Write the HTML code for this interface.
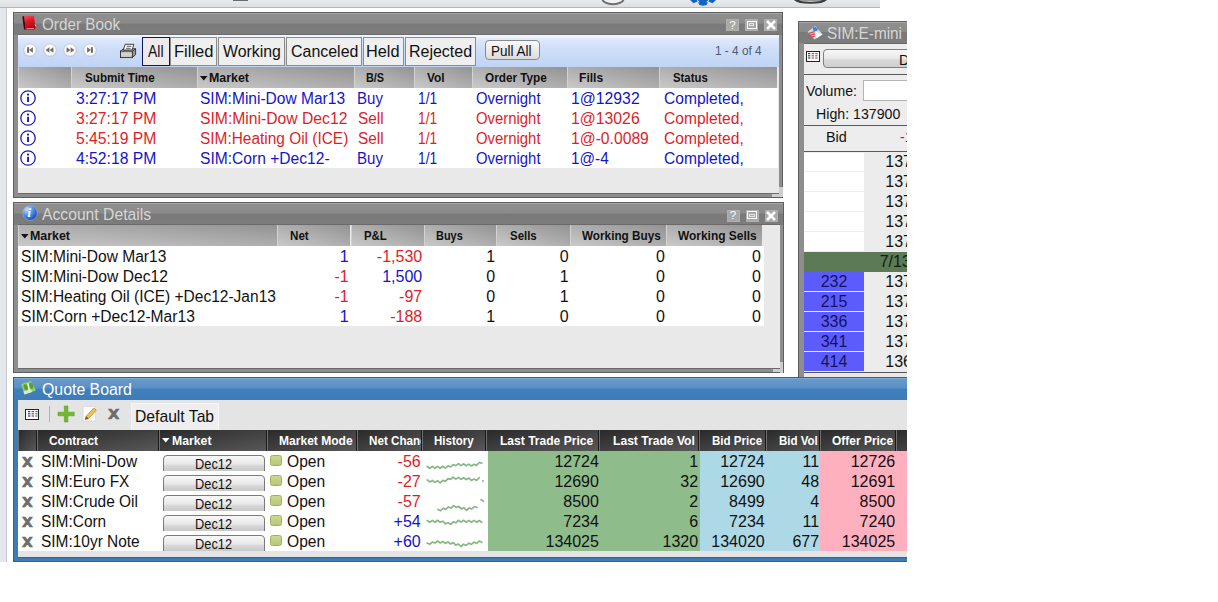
<!DOCTYPE html>
<html lang="en"><head><meta charset="utf-8"><title>Trading Workspace</title>
<style>
html,body{margin:0;padding:0;background:#fff}
body{width:1218px;height:602px;overflow:hidden;position:relative;font-family:"Liberation Sans",sans-serif}
#app{position:absolute;left:0;top:0;width:907px;height:562px;overflow:hidden;background:#fff}
.a{position:absolute;box-sizing:border-box}
.t{position:absolute;white-space:nowrap;line-height:20px;height:20px}
svg{position:absolute;overflow:visible}

</style></head>
<body>
<div id="app">
<div class="a " style="left:0px;top:0px;width:880px;height:7px;background:linear-gradient(#e9ebee,#dcdfe3)"></div>
<div class="a " style="left:0px;top:7px;width:880px;height:1px;background:#b4b6b9"></div>
<div class="a " style="left:0px;top:8px;width:6.3px;height:554px;background:#e4e7eb"></div>
<div class="a " style="left:6.3px;top:8px;width:0.9px;height:554px;background:#c4c7cb"></div>
<div class="a " style="left:233px;top:0px;width:15px;height:1.3px;background:#6a6a6a"></div>
<svg style="left:601px;top:0" width="24" height="6"><path d="M1.5 -1A10.5 5.2 0 0 0 22.5 -1z" fill="#f2f2f2" stroke="#6e6e6e" stroke-width="2"/></svg>
<svg style="left:689px;top:0" width="28" height="7"><path d="M1 0L4.5 3.2L8.5 1.6L10.5 5L14 5.8L17.5 5L19.5 1.6L23.5 3.2L27 0z" fill="#1262c8"/><path d="M8.2 0.4l2 2M19.8 0.4l-2 2" stroke="#dfe7f2" stroke-width="1.2"/></svg>
<svg style="left:794px;top:0" width="34" height="5"><path d="M1 -0.5C5 3.8 28 3.8 32 -0.5z" fill="#f4f4f4" stroke="#3c3c3c" stroke-width="2"/></svg>
<div class="a " style="left:13px;top:12px;width:770px;height:185.5px;background:#8e8e8e;border:1px solid #5e5e5e"></div>
<div class="a " style="left:14px;top:13px;width:768px;height:21.5px;background:linear-gradient(#8f8f8f 0,#8b8b8b 46%,#7a7a7a 50%,#7c7c7c 100%)"></div>
<div class="a " style="left:14px;top:13px;width:768px;height:1px;background:#a6a6a6"></div>
<div class="a " style="left:18px;top:34px;width:761px;height:160px;background:#6a6a6a"></div>
<div class="a " style="left:18px;top:35px;width:761px;height:158px;background:#e9e9e9"></div>
<svg style="left:20px;top:14px" width="18" height="18" viewBox="20 14 18 18"><defs><linearGradient id="bk" x1="0" y1="0" x2="0.3" y2="1"><stop offset="0" stop-color="#f4525e"/><stop offset=".45" stop-color="#e01828"/><stop offset="1" stop-color="#b8000e"/></linearGradient></defs><path d="M22.3 16.6L24.3 16L25.6 29.6L24 29.4z" fill="#3c060a"/><path d="M24.2 16L33.8 15.8L35.6 27.2L34.6 29.4L25.6 30z" fill="url(#bk)"/><path d="M26.5 28.9L34 28.4" stroke="#f6b4b8" stroke-width=".9"/><path d="M35 24.3l.9 2" stroke="#f6c0c4" stroke-width="1"/></svg>
<span class="t" style="top:14.5px;font-size:16px;color:#d6d6d6;left:42.0px;transform:scaleX(0.954);transform-origin:0 50%;">Order Book</span>
<div class="a " style="left:726px;top:19px;width:13px;height:12px;background:#a8a8a8;border:1px solid #b0b0b0"></div>
<div class="a " style="left:745px;top:19px;width:13px;height:12px;background:#a8a8a8;border:1px solid #b0b0b0"></div>
<div class="a " style="left:764px;top:19px;width:13px;height:12px;background:#a8a8a8;border:1px solid #b0b0b0"></div>
<span class="t" style="left:729.2px;top:14.8px;font-size:11.5px;color:#fff">?</span>
<div class="a " style="left:746.5px;top:20.6px;width:10px;height:8px;border:1.3px solid #fff"></div>
<div class="a " style="left:748.6px;top:23px;width:5.8px;height:3.2px;border:1px solid #e4e4e4"></div>
<svg style="left:765.5px;top:20.2px" width="10" height="10"><path d="M1 1L9 9M9 1L1 9" stroke="#fff" stroke-width="2.6"/></svg>
<div class="a " style="left:18px;top:35px;width:761px;height:32px;background:linear-gradient(#f6f9ff 0,#dde8fb 14%,#d0dff8 40%,#bfd4f5 100%)"></div>
<svg style="left:21.9px;top:42px" width="16" height="16" viewBox="-8 -8 16 16"><circle cx="0" cy="0.3" r="6.7" fill="#b9bcc4" opacity=".55"/><circle cx="0" cy="0" r="6" fill="#fbfbfb" stroke="#d0d2d6" stroke-width=".8"/><g fill="#6c6b66"><rect x="-2.9" y="-2.8" width="2" height="5.6"/><path d="M-0.9 0L2.9 -2.8V2.8z"/></g></svg>
<svg style="left:42.1px;top:42px" width="16" height="16" viewBox="-8 -8 16 16"><circle cx="0" cy="0.3" r="6.7" fill="#b9bcc4" opacity=".55"/><circle cx="0" cy="0" r="6" fill="#fbfbfb" stroke="#d0d2d6" stroke-width=".8"/><g fill="#6c6b66"><path d="M-4.4 0L-0.6 -2.8V2.8zM-0.4 0L3.4 -2.8V2.8z"/></g></svg>
<svg style="left:62.099999999999994px;top:42px" width="16" height="16" viewBox="-8 -8 16 16"><circle cx="0" cy="0.3" r="6.7" fill="#b9bcc4" opacity=".55"/><circle cx="0" cy="0" r="6" fill="#fbfbfb" stroke="#d0d2d6" stroke-width=".8"/><g fill="#6c6b66"><path d="M4.4 0L0.6 -2.8V2.8zM0.4 0L-3.4 -2.8V2.8z"/></g></svg>
<svg style="left:81.9px;top:42px" width="16" height="16" viewBox="-8 -8 16 16"><circle cx="0" cy="0.3" r="6.7" fill="#b9bcc4" opacity=".55"/><circle cx="0" cy="0" r="6" fill="#fbfbfb" stroke="#d0d2d6" stroke-width=".8"/><g fill="#6c6b66"><rect x="0.9" y="-2.8" width="2" height="5.6"/><path d="M0.9 0L-2.9 -2.8V2.8z"/></g></svg>
<svg style="left:119px;top:43px" width="18" height="16" viewBox="119 43 18 16"><path d="M120.5 51.2L123.5 48.8H135.5L132.3 51.2z" fill="#e8e8e8" stroke="#2a2a2a" stroke-width=".9"/><path d="M132.3 51.2L135.6 48.8V54.6L132.3 57.6z" fill="#9a9a9a" stroke="#2a2a2a" stroke-width=".9"/><rect x="120.5" y="51.2" width="11.8" height="6.4" fill="#fcfcfc" stroke="#2a2a2a" stroke-width=".9"/><path d="M121 53h11M121 56h11" stroke="#666" stroke-width=".7"/><rect x="121.4" y="53.5" width="10" height="1.9" fill="#d9d6c4"/><path d="M125.2 44.3H133.8L132.1 50H123.3z" fill="#fff" stroke="#2a2a2a" stroke-width=".9"/><path d="M126.7 46.3h4.6M126.1 48.3h4.6" stroke="#444" stroke-width=".9"/></svg>
<div class="a " style="left:142px;top:37px;width:27.5px;height:28.5px;background:#eeeaec;border:1.5px solid #14145c"></div>
<span class="t" style="top:42.0px;font-size:16px;color:#111;left:148.0px;transform:scaleX(0.871);transform-origin:0 50%;">All</span>
<div class="a " style="left:169.5px;top:37px;width:47.5px;height:28.5px;background:#efefef;border:1px solid #8c8c8c"></div>
<span class="t" style="top:42.0px;font-size:16px;color:#111;left:173.5px;transform:scaleX(1.032);transform-origin:0 50%;">Filled</span>
<div class="a " style="left:218px;top:37px;width:66.5px;height:28.5px;background:#efefef;border:1px solid #8c8c8c"></div>
<span class="t" style="top:42.0px;font-size:16px;color:#111;left:222.5px;transform:scaleX(0.991);transform-origin:0 50%;">Working</span>
<div class="a " style="left:286px;top:37px;width:75.5px;height:28.5px;background:#efefef;border:1px solid #8c8c8c"></div>
<span class="t" style="top:42.0px;font-size:16px;color:#111;left:290.5px;transform:scaleX(0.997);transform-origin:0 50%;">Canceled</span>
<div class="a " style="left:363px;top:37px;width:40.5px;height:28.5px;background:#efefef;border:1px solid #8c8c8c"></div>
<span class="t" style="top:42.0px;font-size:16px;color:#111;left:366.2px;transform:scaleX(1.019);transform-origin:0 50%;">Held</span>
<div class="a " style="left:405px;top:37px;width:70.5px;height:28.5px;background:#efefef;border:1px solid #8c8c8c"></div>
<span class="t" style="top:42.0px;font-size:16px;color:#111;left:408.5px;transform:scaleX(0.999);transform-origin:0 50%;">Rejected</span>
<div class="a " style="left:485px;top:40px;width:55px;height:20px;background:linear-gradient(#fafafa,#dcdcdc);border:1px solid #8a8a8a;border-radius:4px"></div>
<span class="t" style="top:41.0px;font-size:14px;color:#111;left:491.2px;transform:scaleX(0.964);transform-origin:0 50%;">Pull All</span>
<span class="t" style="top:41.0px;font-size:12px;color:#4c5c78;left:715.0px;transform:scaleX(0.986);transform-origin:0 50%;">1 - 4 of 4</span>
<div class="a " style="left:18px;top:66.5px;width:759px;height:0.8px;background:#c4c4c4"></div>
<div class="a " style="left:18px;top:67px;width:53px;height:21px;background:linear-gradient(to top right,#c9c9c9,#aeaeae 50%,#939393);border-left:1px solid #d2d2d2"></div>
<div class="a " style="left:71px;top:67px;width:125.5px;height:21px;background:linear-gradient(to top right,#c9c9c9,#aeaeae 50%,#939393);border-left:1px solid #d2d2d2"></div>
<div class="a " style="left:196.5px;top:67px;width:157.0px;height:21px;background:linear-gradient(to top right,#c9c9c9,#aeaeae 50%,#939393);border-left:1px solid #d2d2d2"></div>
<div class="a " style="left:353.5px;top:67px;width:60.0px;height:21px;background:linear-gradient(to top right,#c9c9c9,#aeaeae 50%,#939393);border-left:1px solid #d2d2d2"></div>
<div class="a " style="left:413.5px;top:67px;width:58.0px;height:21px;background:linear-gradient(to top right,#c9c9c9,#aeaeae 50%,#939393);border-left:1px solid #d2d2d2"></div>
<div class="a " style="left:471.5px;top:67px;width:95.0px;height:21px;background:linear-gradient(to top right,#c9c9c9,#aeaeae 50%,#939393);border-left:1px solid #d2d2d2"></div>
<div class="a " style="left:566.5px;top:67px;width:92.5px;height:21px;background:linear-gradient(to top right,#c9c9c9,#aeaeae 50%,#939393);border-left:1px solid #d2d2d2"></div>
<div class="a " style="left:659px;top:67px;width:118px;height:21px;background:linear-gradient(to top right,#c9c9c9,#aeaeae 50%,#939393);border-left:1px solid #d2d2d2"></div>
<span class="t" style="top:67.5px;font-size:12px;color:#111;font-weight:bold;left:85.0px;transform:scaleX(0.971);transform-origin:0 50%;">Submit Time</span>
<span class="t" style="top:67.5px;font-size:12px;color:#111;font-weight:bold;left:209.0px;transform:scaleX(1.034);transform-origin:0 50%;">Market</span>
<span class="t" style="top:67.5px;font-size:12px;color:#111;font-weight:bold;left:366.4px;transform:scaleX(0.905);transform-origin:0 50%;">B/S</span>
<span class="t" style="top:67.5px;font-size:12px;color:#111;font-weight:bold;left:426.7px;transform:scaleX(0.992);transform-origin:0 50%;">Vol</span>
<span class="t" style="top:67.5px;font-size:12px;color:#111;font-weight:bold;left:484.5px;transform:scaleX(0.979);transform-origin:0 50%;">Order Type</span>
<span class="t" style="top:67.5px;font-size:12px;color:#111;font-weight:bold;left:578.5px;transform:scaleX(1.007);transform-origin:0 50%;">Fills</span>
<span class="t" style="top:67.5px;font-size:12px;color:#111;font-weight:bold;left:673.0px;transform:scaleX(0.946);transform-origin:0 50%;">Status</span>
<svg style="left:200.3px;top:75.5px" width="8" height="5"><path d="M0 0h7.6L3.8 4.6z" fill="#111"/></svg>
<div class="a " style="left:18px;top:88px;width:760px;height:80px;background:#fff"></div>
<svg style="left:20px;top:90px" width="16" height="16"><circle cx="8" cy="8" r="7.2" fill="#fff" stroke="#1c1cb4" stroke-width="1.3"/><rect x="7.1" y="6.8" width="1.9" height="5.2" fill="#1c1cb4"/><circle cx="8" cy="4.6" r="1.1" fill="#1c1cb4"/></svg>
<span class="t" style="top:89.0px;font-size:16px;color:#1414c8;left:75.5px;transform:scaleX(0.982);transform-origin:0 50%;">3:27:17 PM</span>
<span class="t" style="top:89.0px;font-size:16px;color:#1414c8;left:200.3px;transform:scaleX(0.971);transform-origin:0 50%;">SIM:Mini-Dow Mar13</span>
<span class="t" style="top:89.0px;font-size:16px;color:#1414c8;left:356.8px;transform:scaleX(0.941);transform-origin:0 50%;">Buy</span>
<span class="t" style="top:89.0px;font-size:16px;color:#1414c8;left:417.7px;transform:scaleX(0.857);transform-origin:0 50%;">1/1</span>
<span class="t" style="top:89.0px;font-size:16px;color:#1414c8;left:475.8px;transform:scaleX(0.930);transform-origin:0 50%;">Overnight</span>
<span class="t" style="top:89.0px;font-size:16px;color:#1414c8;left:570.5px;transform:scaleX(0.986);transform-origin:0 50%;">1@12932</span>
<span class="t" style="top:89.0px;font-size:16px;color:#1414c8;left:664.1px;transform:scaleX(0.975);transform-origin:0 50%;">Completed,</span>
<svg style="left:20px;top:110px" width="16" height="16"><circle cx="8" cy="8" r="7.2" fill="#fff" stroke="#1c1cb4" stroke-width="1.3"/><rect x="7.1" y="6.8" width="1.9" height="5.2" fill="#1c1cb4"/><circle cx="8" cy="4.6" r="1.1" fill="#1c1cb4"/></svg>
<span class="t" style="top:109.0px;font-size:16px;color:#dc1e28;left:75.5px;transform:scaleX(0.982);transform-origin:0 50%;">3:27:17 PM</span>
<span class="t" style="top:109.0px;font-size:16px;color:#dc1e28;left:200.3px;transform:scaleX(0.981);transform-origin:0 50%;">SIM:Mini-Dow Dec12</span>
<span class="t" style="top:109.0px;font-size:16px;color:#dc1e28;left:357.7px;transform:scaleX(0.957);transform-origin:0 50%;">Sell</span>
<span class="t" style="top:109.0px;font-size:16px;color:#dc1e28;left:417.7px;transform:scaleX(0.857);transform-origin:0 50%;">1/1</span>
<span class="t" style="top:109.0px;font-size:16px;color:#dc1e28;left:475.8px;transform:scaleX(0.930);transform-origin:0 50%;">Overnight</span>
<span class="t" style="top:109.0px;font-size:16px;color:#dc1e28;left:570.5px;transform:scaleX(0.986);transform-origin:0 50%;">1@13026</span>
<span class="t" style="top:109.0px;font-size:16px;color:#dc1e28;left:664.1px;transform:scaleX(0.975);transform-origin:0 50%;">Completed,</span>
<svg style="left:20px;top:130px" width="16" height="16"><circle cx="8" cy="8" r="7.2" fill="#fff" stroke="#1c1cb4" stroke-width="1.3"/><rect x="7.1" y="6.8" width="1.9" height="5.2" fill="#1c1cb4"/><circle cx="8" cy="4.6" r="1.1" fill="#1c1cb4"/></svg>
<span class="t" style="top:129.0px;font-size:16px;color:#dc1e28;left:75.5px;transform:scaleX(0.982);transform-origin:0 50%;">5:45:19 PM</span>
<span class="t" style="top:129.0px;font-size:16px;color:#dc1e28;left:200.3px;transform:scaleX(0.964);transform-origin:0 50%;">SIM:Heating Oil (ICE)</span>
<span class="t" style="top:129.0px;font-size:16px;color:#dc1e28;left:357.7px;transform:scaleX(0.957);transform-origin:0 50%;">Sell</span>
<span class="t" style="top:129.0px;font-size:16px;color:#dc1e28;left:417.7px;transform:scaleX(0.857);transform-origin:0 50%;">1/1</span>
<span class="t" style="top:129.0px;font-size:16px;color:#dc1e28;left:475.8px;transform:scaleX(0.930);transform-origin:0 50%;">Overnight</span>
<span class="t" style="top:129.0px;font-size:16px;color:#dc1e28;left:570.5px;transform:scaleX(0.980);transform-origin:0 50%;">1@-0.0089</span>
<span class="t" style="top:129.0px;font-size:16px;color:#dc1e28;left:664.1px;transform:scaleX(0.975);transform-origin:0 50%;">Completed,</span>
<svg style="left:20px;top:150px" width="16" height="16"><circle cx="8" cy="8" r="7.2" fill="#fff" stroke="#1c1cb4" stroke-width="1.3"/><rect x="7.1" y="6.8" width="1.9" height="5.2" fill="#1c1cb4"/><circle cx="8" cy="4.6" r="1.1" fill="#1c1cb4"/></svg>
<span class="t" style="top:149.0px;font-size:16px;color:#1414c8;left:75.5px;transform:scaleX(0.982);transform-origin:0 50%;">4:52:18 PM</span>
<span class="t" style="top:149.0px;font-size:16px;color:#1414c8;left:200.3px;transform:scaleX(0.975);transform-origin:0 50%;">SIM:Corn +Dec12-</span>
<span class="t" style="top:149.0px;font-size:16px;color:#1414c8;left:356.8px;transform:scaleX(0.941);transform-origin:0 50%;">Buy</span>
<span class="t" style="top:149.0px;font-size:16px;color:#1414c8;left:417.7px;transform:scaleX(0.857);transform-origin:0 50%;">1/1</span>
<span class="t" style="top:149.0px;font-size:16px;color:#1414c8;left:475.8px;transform:scaleX(0.930);transform-origin:0 50%;">Overnight</span>
<span class="t" style="top:149.0px;font-size:16px;color:#1414c8;left:570.5px;transform:scaleX(0.957);transform-origin:0 50%;">1@-4</span>
<span class="t" style="top:149.0px;font-size:16px;color:#1414c8;left:664.1px;transform:scaleX(0.975);transform-origin:0 50%;">Completed,</span>
<div class="a " style="left:777.5px;top:67px;width:1.5px;height:126px;background:#e6e6e6"></div>
<div class="a " style="left:779.3px;top:187px;width:3.4px;height:10.3px;background:#cdcdcd"></div>
<div class="a " style="left:772px;top:193.6px;width:10.7px;height:3.7px;background:#cdcdcd"></div>
<div class="a " style="left:13px;top:202px;width:770.5px;height:171px;background:#8e8e8e;border:1px solid #5e5e5e"></div>
<div class="a " style="left:14px;top:203px;width:768.5px;height:21.5px;background:linear-gradient(#8f8f8f 0,#8b8b8b 46%,#7a7a7a 50%,#7c7c7c 100%)"></div>
<div class="a " style="left:14px;top:203px;width:768.5px;height:1px;background:#a6a6a6"></div>
<div class="a " style="left:18px;top:224px;width:761.5px;height:145px;background:#6a6a6a"></div>
<div class="a " style="left:18px;top:225px;width:761.5px;height:143px;background:#e9e9e9"></div>
<svg style="left:22px;top:205px" width="16" height="16"><defs><radialGradient id="ig" cx=".3" cy=".25" r=".95"><stop offset="0" stop-color="#c4dcf8"/><stop offset=".4" stop-color="#5a96e6"/><stop offset=".7" stop-color="#2462d4"/><stop offset="1" stop-color="#0c2478"/></radialGradient></defs><circle cx="8" cy="8" r="7.3" fill="url(#ig)" stroke="#9fb4d8" stroke-width=".6"/><text x="5.6" y="12.2" font-family="Liberation Serif, serif" font-style="italic" font-weight="bold" font-size="12.5" fill="#fff">i</text></svg>
<span class="t" style="top:204.5px;font-size:16px;color:#d6d6d6;left:42.0px;transform:scaleX(0.981);transform-origin:0 50%;">Account Details</span>
<div class="a " style="left:726.5px;top:209.5px;width:13px;height:12px;background:#a8a8a8;border:1px solid #b0b0b0"></div>
<div class="a " style="left:745.5px;top:209.5px;width:13px;height:12px;background:#a8a8a8;border:1px solid #b0b0b0"></div>
<div class="a " style="left:764.5px;top:209.5px;width:13px;height:12px;background:#a8a8a8;border:1px solid #b0b0b0"></div>
<span class="t" style="left:729.7px;top:205.3px;font-size:11.5px;color:#fff">?</span>
<div class="a " style="left:747.0px;top:211.1px;width:10px;height:8px;border:1.3px solid #fff"></div>
<div class="a " style="left:749.1px;top:213.5px;width:5.8px;height:3.2px;border:1px solid #e4e4e4"></div>
<svg style="left:766.0px;top:210.7px" width="10" height="10"><path d="M1 1L9 9M9 1L1 9" stroke="#fff" stroke-width="2.6"/></svg>
<div class="a " style="left:18px;top:225px;width:259.3px;height:21px;background:linear-gradient(to top right,#c9c9c9,#aeaeae 50%,#939393);border-left:1px solid #d2d2d2"></div>
<div class="a " style="left:277.3px;top:225px;width:73.19999999999999px;height:21px;background:linear-gradient(to top right,#c9c9c9,#aeaeae 50%,#939393);border-left:1px solid #d2d2d2"></div>
<div class="a " style="left:350.5px;top:225px;width:73.30000000000001px;height:21px;background:linear-gradient(to top right,#c9c9c9,#aeaeae 50%,#939393);border-left:1px solid #d2d2d2"></div>
<div class="a " style="left:423.8px;top:225px;width:72.59999999999997px;height:21px;background:linear-gradient(to top right,#c9c9c9,#aeaeae 50%,#939393);border-left:1px solid #d2d2d2"></div>
<div class="a " style="left:496.4px;top:225px;width:73.39999999999998px;height:21px;background:linear-gradient(to top right,#c9c9c9,#aeaeae 50%,#939393);border-left:1px solid #d2d2d2"></div>
<div class="a " style="left:569.8px;top:225px;width:96.40000000000009px;height:21px;background:linear-gradient(to top right,#c9c9c9,#aeaeae 50%,#939393);border-left:1px solid #d2d2d2"></div>
<div class="a " style="left:666.2px;top:225px;width:96.29999999999995px;height:21px;background:linear-gradient(to top right,#c9c9c9,#aeaeae 50%,#939393);border-left:1px solid #d2d2d2"></div>
<svg style="left:21.2px;top:233.5px" width="8" height="5"><path d="M0 0h7.6L3.8 4.6z" fill="#111"/></svg>
<span class="t" style="top:225.5px;font-size:12px;color:#111;font-weight:bold;left:30.0px;transform:scaleX(1.034);transform-origin:0 50%;">Market</span>
<span class="t" style="top:225.5px;font-size:12px;color:#111;font-weight:bold;left:290.3px;transform:scaleX(0.967);transform-origin:0 50%;">Net</span>
<span class="t" style="top:225.5px;font-size:12px;color:#111;font-weight:bold;left:363.5px;transform:scaleX(0.951);transform-origin:0 50%;">P&amp;L</span>
<span class="t" style="top:225.5px;font-size:12px;color:#111;font-weight:bold;left:436.0px;transform:scaleX(0.910);transform-origin:0 50%;">Buys</span>
<span class="t" style="top:225.5px;font-size:12px;color:#111;font-weight:bold;left:510.0px;transform:scaleX(0.953);transform-origin:0 50%;">Sells</span>
<span class="t" style="top:225.5px;font-size:12px;color:#111;font-weight:bold;left:582.0px;transform:scaleX(0.978);transform-origin:0 50%;">Working Buys</span>
<span class="t" style="top:225.5px;font-size:12px;color:#111;font-weight:bold;left:678.0px;transform:scaleX(0.994);transform-origin:0 50%;">Working Sells</span>
<div class="a " style="left:18px;top:246px;width:745.5px;height:80px;background:#fff"></div>
<span class="t" style="top:247.0px;font-size:16px;color:#111;left:21.4px;transform:scaleX(0.973);transform-origin:0 50%;">SIM:Mini-Dow Mar13</span>
<span class="t" style="top:247.0px;font-size:16px;color:#1414c8;right:558.3px;transform:scaleX(1.000);transform-origin:100% 50%;">1</span>
<span class="t" style="top:247.0px;font-size:16px;color:#dc1e28;right:484.8px;transform:scaleX(1.000);transform-origin:100% 50%;">-1,530</span>
<span class="t" style="top:247.0px;font-size:16px;color:#111;right:411.9px;transform:scaleX(1.000);transform-origin:100% 50%;">1</span>
<span class="t" style="top:247.0px;font-size:16px;color:#111;right:338.3px;transform:scaleX(1.000);transform-origin:100% 50%;">0</span>
<span class="t" style="top:247.0px;font-size:16px;color:#111;right:242.1px;transform:scaleX(1.000);transform-origin:100% 50%;">0</span>
<span class="t" style="top:247.0px;font-size:16px;color:#111;right:146.1px;transform:scaleX(1.000);transform-origin:100% 50%;">0</span>
<span class="t" style="top:267.0px;font-size:16px;color:#111;left:21.4px;transform:scaleX(0.978);transform-origin:0 50%;">SIM:Mini-Dow Dec12</span>
<span class="t" style="top:267.0px;font-size:16px;color:#dc1e28;right:558.3px;transform:scaleX(1.000);transform-origin:100% 50%;">-1</span>
<span class="t" style="top:267.0px;font-size:16px;color:#1414c8;right:484.8px;transform:scaleX(1.000);transform-origin:100% 50%;">1,500</span>
<span class="t" style="top:267.0px;font-size:16px;color:#111;right:411.9px;transform:scaleX(1.000);transform-origin:100% 50%;">0</span>
<span class="t" style="top:267.0px;font-size:16px;color:#111;right:338.3px;transform:scaleX(1.000);transform-origin:100% 50%;">1</span>
<span class="t" style="top:267.0px;font-size:16px;color:#111;right:242.1px;transform:scaleX(1.000);transform-origin:100% 50%;">0</span>
<span class="t" style="top:267.0px;font-size:16px;color:#111;right:146.1px;transform:scaleX(1.000);transform-origin:100% 50%;">0</span>
<span class="t" style="top:287.0px;font-size:16px;color:#111;left:21.4px;transform:scaleX(0.970);transform-origin:0 50%;">SIM:Heating Oil (ICE) +Dec12-Jan13</span>
<span class="t" style="top:287.0px;font-size:16px;color:#dc1e28;right:558.3px;transform:scaleX(1.000);transform-origin:100% 50%;">-1</span>
<span class="t" style="top:287.0px;font-size:16px;color:#dc1e28;right:484.8px;transform:scaleX(1.000);transform-origin:100% 50%;">-97</span>
<span class="t" style="top:287.0px;font-size:16px;color:#111;right:411.9px;transform:scaleX(1.000);transform-origin:100% 50%;">0</span>
<span class="t" style="top:287.0px;font-size:16px;color:#111;right:338.3px;transform:scaleX(1.000);transform-origin:100% 50%;">1</span>
<span class="t" style="top:287.0px;font-size:16px;color:#111;right:242.1px;transform:scaleX(1.000);transform-origin:100% 50%;">0</span>
<span class="t" style="top:287.0px;font-size:16px;color:#111;right:146.1px;transform:scaleX(1.000);transform-origin:100% 50%;">0</span>
<span class="t" style="top:307.0px;font-size:16px;color:#111;left:21.4px;transform:scaleX(0.975);transform-origin:0 50%;">SIM:Corn +Dec12-Mar13</span>
<span class="t" style="top:307.0px;font-size:16px;color:#1414c8;right:558.3px;transform:scaleX(1.000);transform-origin:100% 50%;">1</span>
<span class="t" style="top:307.0px;font-size:16px;color:#dc1e28;right:484.8px;transform:scaleX(1.000);transform-origin:100% 50%;">-188</span>
<span class="t" style="top:307.0px;font-size:16px;color:#111;right:411.9px;transform:scaleX(1.000);transform-origin:100% 50%;">1</span>
<span class="t" style="top:307.0px;font-size:16px;color:#111;right:338.3px;transform:scaleX(1.000);transform-origin:100% 50%;">0</span>
<span class="t" style="top:307.0px;font-size:16px;color:#111;right:242.1px;transform:scaleX(1.000);transform-origin:100% 50%;">0</span>
<span class="t" style="top:307.0px;font-size:16px;color:#111;right:146.1px;transform:scaleX(1.000);transform-origin:100% 50%;">0</span>
<div class="a " style="left:780px;top:362px;width:3.2px;height:10.5px;background:#cdcdcd"></div>
<div class="a " style="left:772.5px;top:368.6px;width:10.7px;height:3.6px;background:#cdcdcd"></div>
<div class="a " style="left:798px;top:21px;width:120px;height:360px;background:#8e8e8e;border:1px solid #5e5e5e"></div>
<div class="a " style="left:799px;top:22px;width:118px;height:21px;background:linear-gradient(#8f8f8f 0,#8b8b8b 46%,#7a7a7a 50%,#7c7c7c 100%)"></div>
<div class="a " style="left:799px;top:22px;width:118px;height:1px;background:#a6a6a6"></div>
<div class="a " style="left:803.5px;top:43px;width:110px;height:330px;background:#6a6a6a"></div>
<div class="a " style="left:803.5px;top:44px;width:110px;height:328.5px;background:#ededed"></div>
<span class="t" style="top:23.5px;font-size:16px;color:#d6d6d6;left:826.5px;transform:scaleX(0.959);transform-origin:0 50%;">SIM:E-mini</span>
<svg style="left:806px;top:24px" width="18" height="17"><path d="M1.5 8L9 2L16.5 10L8.5 15.5Z" fill="#e4e8ee" opacity=".85"/><path d="M9.5 7.5L16.5 10.5L10.5 14.5Z" fill="#f6f6f8"/><circle cx="9.3" cy="4.8" r="2.5" fill="#4a84c4"/><path d="M8 3.2a2 2 0 0 1 3 .6" stroke="#a8c8ec" stroke-width="1" fill="none"/><path d="M2.6 9.3l6-1.6M3 11.4l6-1.6M3.6 13.5l5-1.4" stroke="#dc4650" stroke-width="1.3"/></svg>
<div class="a " style="left:806.3px;top:51.2px;width:14px;height:10.4px;background:#fff;border:1px solid #222;border-bottom-width:1.6px;border-right-width:1.4px"></div>
<svg style="left:808.4px;top:53.2px" width="11" height="6"><rect x="0.0" y="0.0" width="2.4" height="1.2" fill="#2a5a4e"/><rect x="3.6" y="0.0" width="2.4" height="1.2" fill="#c8406e"/><rect x="7.2" y="0.0" width="2.4" height="1.2" fill="#3a8a5a"/><rect x="0.0" y="2.2" width="2.4" height="1.2" fill="#2a5a4e"/><rect x="3.6" y="2.2" width="2.4" height="1.2" fill="#c8406e"/><rect x="7.2" y="2.2" width="2.4" height="1.2" fill="#3a8a5a"/><rect x="0.0" y="4.4" width="2.4" height="1.2" fill="#2a5a4e"/><rect x="3.6" y="4.4" width="2.4" height="1.2" fill="#c8406e"/><rect x="7.2" y="4.4" width="2.4" height="1.2" fill="#3a8a5a"/></svg>
<div class="a " style="left:822.5px;top:49px;width:120px;height:19.3px;background:linear-gradient(#f8f8f8,#e8e8e8 52%,#d8d8d8 58%,#cfcfcf);border:1px solid #808080;border-radius:4px"></div>
<span class="t" style="top:50.0px;font-size:15px;color:#111;left:898.5px;transform:scaleX(0.950);transform-origin:0 50%;">D</span>
<div class="a " style="left:803.5px;top:74px;width:110px;height:1px;background:#5a5a5a"></div>
<span class="t" style="top:80.5px;font-size:14px;color:#111;left:806.0px;transform:scaleX(1.006);transform-origin:0 50%;">Volume:</span>
<div class="a " style="left:863px;top:79.5px;width:60px;height:21px;background:#fff;border:1px solid #b4b4b4"></div>
<span class="t" style="top:103.5px;font-size:14px;color:#111;left:815.5px;transform:scaleX(1.012);transform-origin:0 50%;">High: 137900</span>
<div class="a " style="left:803.5px;top:125.2px;width:110px;height:1px;background:#5a5a5a"></div>
<span class="t" style="top:126.5px;font-size:14px;color:#111;left:826.4px;transform:scaleX(1.030);transform-origin:0 50%;">Bid</span>
<span class="t" style="top:126.5px;font-size:14px;color:#c8141e;left:900.0px;transform:scaleX(1.000);transform-origin:0 50%;">-1</span>
<div class="a " style="left:803.5px;top:151px;width:110px;height:1px;background:#5a5a5a"></div>
<div class="a " style="left:803.5px;top:152.5px;width:60.5px;height:220px;background:#fff"></div>
<div class="a " style="left:864px;top:152.5px;width:50px;height:220px;background:#ececec"></div>
<div class="a " style="left:803.5px;top:171.0px;width:60.5px;height:1px;background:#eeeeee"></div>
<span class="t" style="top:151.8px;font-size:16px;color:#111;left:885.3px;transform:scaleX(1.000);transform-origin:0 50%;">137</span>
<div class="a " style="left:803.5px;top:191.0px;width:60.5px;height:1px;background:#eeeeee"></div>
<span class="t" style="top:171.8px;font-size:16px;color:#111;left:885.3px;transform:scaleX(1.000);transform-origin:0 50%;">137</span>
<div class="a " style="left:803.5px;top:211.0px;width:60.5px;height:1px;background:#eeeeee"></div>
<span class="t" style="top:191.8px;font-size:16px;color:#111;left:885.3px;transform:scaleX(1.000);transform-origin:0 50%;">137</span>
<div class="a " style="left:803.5px;top:231.0px;width:60.5px;height:1px;background:#eeeeee"></div>
<span class="t" style="top:211.8px;font-size:16px;color:#111;left:885.3px;transform:scaleX(1.000);transform-origin:0 50%;">137</span>
<div class="a " style="left:803.5px;top:251.0px;width:60.5px;height:1px;background:#eeeeee"></div>
<span class="t" style="top:231.8px;font-size:16px;color:#111;left:885.3px;transform:scaleX(1.000);transform-origin:0 50%;">137</span>
<div class="a " style="left:803.5px;top:251.5px;width:110px;height:20px;background:#5c7a56"></div>
<span class="t" style="top:251.8px;font-size:16px;color:#10200c;left:879.7px;transform:scaleX(1.000);transform-origin:0 50%;">7/13</span>
<div class="a " style="left:803.5px;top:291.0px;width:60.5px;height:1px;background:#eeeeee"></div>
<div class="a " style="left:803.5px;top:272.0px;width:60.5px;height:19px;background:#5c5cfc"></div>
<span class="t" style="top:271.8px;font-size:16px;color:#14145c;left:820.7px;transform:scaleX(1.000);transform-origin:50% 50%;">232</span>
<span class="t" style="top:271.8px;font-size:16px;color:#111;left:885.3px;transform:scaleX(1.000);transform-origin:0 50%;">137</span>
<div class="a " style="left:803.5px;top:311.0px;width:60.5px;height:1px;background:#eeeeee"></div>
<div class="a " style="left:803.5px;top:292.0px;width:60.5px;height:19px;background:#5c5cfc"></div>
<span class="t" style="top:291.8px;font-size:16px;color:#14145c;left:820.7px;transform:scaleX(1.000);transform-origin:50% 50%;">215</span>
<span class="t" style="top:291.8px;font-size:16px;color:#111;left:885.3px;transform:scaleX(1.000);transform-origin:0 50%;">137</span>
<div class="a " style="left:803.5px;top:331.0px;width:60.5px;height:1px;background:#eeeeee"></div>
<div class="a " style="left:803.5px;top:312.0px;width:60.5px;height:19px;background:#5c5cfc"></div>
<span class="t" style="top:311.8px;font-size:16px;color:#14145c;left:820.7px;transform:scaleX(1.000);transform-origin:50% 50%;">336</span>
<span class="t" style="top:311.8px;font-size:16px;color:#111;left:885.3px;transform:scaleX(1.000);transform-origin:0 50%;">137</span>
<div class="a " style="left:803.5px;top:351.0px;width:60.5px;height:1px;background:#eeeeee"></div>
<div class="a " style="left:803.5px;top:332.0px;width:60.5px;height:19px;background:#5c5cfc"></div>
<span class="t" style="top:331.8px;font-size:16px;color:#14145c;left:820.7px;transform:scaleX(1.000);transform-origin:50% 50%;">341</span>
<span class="t" style="top:331.8px;font-size:16px;color:#111;left:885.3px;transform:scaleX(1.000);transform-origin:0 50%;">137</span>
<div class="a " style="left:803.5px;top:371.0px;width:60.5px;height:1px;background:#eeeeee"></div>
<div class="a " style="left:803.5px;top:352.0px;width:60.5px;height:19px;background:#5c5cfc"></div>
<span class="t" style="top:351.8px;font-size:16px;color:#14145c;left:820.7px;transform:scaleX(1.000);transform-origin:50% 50%;">414</span>
<span class="t" style="top:351.8px;font-size:16px;color:#111;left:885.3px;transform:scaleX(1.000);transform-origin:0 50%;">136</span>
<div class="a " style="left:803.5px;top:372px;width:110px;height:1px;background:#555"></div>
<div class="a " style="left:803.5px;top:373px;width:110px;height:4px;background:#e8e8e8"></div>
<div class="a " style="left:13px;top:377px;width:910px;height:185px;background:#3f7cb6;border:1px solid #2f6398"></div>
<div class="a " style="left:14px;top:378px;width:908px;height:22px;background:linear-gradient(#6a9acb 0,#5b8fc3 46%,#3f7fbc 50%,#3d7cb8 100%)"></div>
<div class="a " style="left:14px;top:378px;width:908px;height:1px;background:#7eaad6"></div>
<div class="a " style="left:17.5px;top:399.5px;width:900px;height:158px;background:#2f6398"></div>
<div class="a " style="left:18px;top:400px;width:900px;height:157px;background:#e4e4e4"></div>
<svg style="left:20px;top:380px" width="18" height="16"><path d="M1.2 4L11 1L16 10.5L4.5 14.5Z" fill="#90d06c"/><path d="M3.4 11.4L4.6 14.6L12.2 12L11 9.2Z" fill="#d8ead0"/><ellipse cx="5.8" cy="7.2" rx="2.1" ry="3.1" transform="rotate(-18 5.8 7.2)" fill="#5c9c36"/><ellipse cx="11" cy="5.9" rx="2.1" ry="3.1" transform="rotate(-18 11 5.9)" fill="#5c9c36"/><path d="M8 3.4L9.2 10" stroke="#dff2d6" stroke-width="1.7"/></svg>
<span class="t" style="top:379.5px;font-size:16px;color:#fff;left:41.5px;transform:scaleX(0.991);transform-origin:0 50%;">Quote Board</span>
<div class="a " style="left:25.2px;top:409.2px;width:14px;height:10.8px;background:#fff;border:1px solid #222;border-bottom-width:1.6px;border-right-width:1.4px"></div>
<svg style="left:27.6px;top:411.2px" width="11" height="6"><rect x="0.0" y="0.0" width="2.4" height="1.2" fill="#2a3a8c"/><rect x="3.6" y="0.0" width="2.4" height="1.2" fill="#a23a5c"/><rect x="7.2" y="0.0" width="2.4" height="1.2" fill="#3a8a62"/><rect x="0.0" y="2.2" width="2.4" height="1.2" fill="#2a3a8c"/><rect x="3.6" y="2.2" width="2.4" height="1.2" fill="#a23a5c"/><rect x="7.2" y="2.2" width="2.4" height="1.2" fill="#3a8a62"/><rect x="0.0" y="4.4" width="2.4" height="1.2" fill="#2a3a8c"/><rect x="3.6" y="4.4" width="2.4" height="1.2" fill="#a23a5c"/><rect x="7.2" y="4.4" width="2.4" height="1.2" fill="#3a8a62"/></svg>
<div class="a " style="left:49px;top:406px;width:1px;height:16px;background:#b0b0b0"></div>
<svg style="left:58px;top:406px" width="17" height="16"><path d="M6.3 0h3.6v6.2h6.3v3.6h-6.3v6.2h-3.6v-6.2h-6.3v-3.6h6.3z" fill="#72b82e" stroke="#5c9e22" stroke-width=".6"/></svg>
<svg style="left:82px;top:405px" width="16" height="17"><rect x="1" y="1.5" width="12.5" height="14.5" fill="#fcfcfc" stroke="#d4d8e0" stroke-width=".8"/><path d="M4.2 11.2L11.8 3L14.2 5.2L6.6 13.6L3.2 14.6Z" fill="#f2c04c" stroke="#c08a2a" stroke-width=".8"/><path d="M4.2 11.2L6.6 13.6L3.2 14.6Z" fill="#7a4a1c"/></svg>
<span class="t" style="top:404.4px;font-size:14.5px;color:#6c6c6c;font-weight:bold;font-family:'DejaVu Sans',sans-serif;-webkit-text-stroke:.6px #6c6c6c;left:108.3px;transform:scaleX(1.018);transform-origin:0 50%;">X</span>
<div class="a " style="left:130.5px;top:402.5px;width:88.5px;height:28px;background:#eeeeee;border:1px solid #f6f6f6;border-bottom:none"></div>
<span class="t" style="top:406.5px;font-size:17px;color:#111;left:134.6px;transform:scaleX(0.923);transform-origin:0 50%;">Default Tab</span>
<div class="a " style="left:18px;top:430px;width:18.5px;height:21px;background:linear-gradient(to bottom right,#2a2a2a,#404040 50%,#585858);border-left:1px solid #6e6e6e;border-right:1px solid #1a1a1a"></div>
<div class="a " style="left:36.5px;top:430px;width:122.0px;height:21px;background:linear-gradient(to bottom right,#2a2a2a,#404040 50%,#585858);border-left:1px solid #6e6e6e;border-right:1px solid #1a1a1a"></div>
<div class="a " style="left:158.5px;top:430px;width:108.0px;height:21px;background:linear-gradient(to bottom right,#2a2a2a,#404040 50%,#585858);border-left:1px solid #6e6e6e;border-right:1px solid #1a1a1a"></div>
<div class="a " style="left:266.5px;top:430px;width:90.0px;height:21px;background:linear-gradient(to bottom right,#2a2a2a,#404040 50%,#585858);border-left:1px solid #6e6e6e;border-right:1px solid #1a1a1a"></div>
<div class="a " style="left:356.5px;top:430px;width:65.0px;height:21px;background:linear-gradient(to bottom right,#2a2a2a,#404040 50%,#585858);border-left:1px solid #6e6e6e;border-right:1px solid #1a1a1a"></div>
<div class="a " style="left:421.5px;top:430px;width:64.5px;height:21px;background:linear-gradient(to bottom right,#2a2a2a,#404040 50%,#585858);border-left:1px solid #6e6e6e;border-right:1px solid #1a1a1a"></div>
<div class="a " style="left:486px;top:430px;width:113px;height:21px;background:linear-gradient(to bottom right,#2a2a2a,#404040 50%,#585858);border-left:1px solid #6e6e6e;border-right:1px solid #1a1a1a"></div>
<div class="a " style="left:599px;top:430px;width:100px;height:21px;background:linear-gradient(to bottom right,#2a2a2a,#404040 50%,#585858);border-left:1px solid #6e6e6e;border-right:1px solid #1a1a1a"></div>
<div class="a " style="left:699px;top:430px;width:66.5px;height:21px;background:linear-gradient(to bottom right,#2a2a2a,#404040 50%,#585858);border-left:1px solid #6e6e6e;border-right:1px solid #1a1a1a"></div>
<div class="a " style="left:765.5px;top:430px;width:54.0px;height:21px;background:linear-gradient(to bottom right,#2a2a2a,#404040 50%,#585858);border-left:1px solid #6e6e6e;border-right:1px solid #1a1a1a"></div>
<div class="a " style="left:819.5px;top:430px;width:76.0px;height:21px;background:linear-gradient(to bottom right,#2a2a2a,#404040 50%,#585858);border-left:1px solid #6e6e6e;border-right:1px solid #1a1a1a"></div>
<div class="a " style="left:895.5px;top:430px;width:64.5px;height:21px;background:linear-gradient(to bottom right,#2a2a2a,#404040 50%,#585858);border-left:1px solid #6e6e6e;border-right:1px solid #1a1a1a"></div>
<svg style="left:161.5px;top:437.5px" width="8" height="5"><path d="M0 0h7.6L3.8 4.6z" fill="#fff"/></svg>
<span class="t" style="top:430.5px;font-size:12px;color:#fff;font-weight:bold;left:49.0px;transform:scaleX(0.993);transform-origin:0 50%;">Contract</span>
<span class="t" style="top:430.5px;font-size:12px;color:#fff;font-weight:bold;left:171.5px;transform:scaleX(1.021);transform-origin:0 50%;">Market</span>
<span class="t" style="top:430.5px;font-size:12px;color:#fff;font-weight:bold;left:279.0px;transform:scaleX(1.004);transform-origin:0 50%;">Market Mode</span>
<span class="t" style="top:430.5px;font-size:12px;color:#fff;font-weight:bold;left:434.0px;transform:scaleX(0.960);transform-origin:0 50%;">History</span>
<span class="t" style="top:430.5px;font-size:12px;color:#fff;font-weight:bold;left:499.5px;transform:scaleX(1.005);transform-origin:0 50%;">Last Trade Price</span>
<span class="t" style="top:430.5px;font-size:12px;color:#fff;font-weight:bold;left:612.5px;transform:scaleX(1.009);transform-origin:0 50%;">Last Trade Vol</span>
<span class="t" style="top:430.5px;font-size:12px;color:#fff;font-weight:bold;left:711.5px;transform:scaleX(0.965);transform-origin:0 50%;">Bid Price</span>
<span class="t" style="top:430.5px;font-size:12px;color:#fff;font-weight:bold;left:778.5px;transform:scaleX(0.960);transform-origin:0 50%;">Bid Vol</span>
<span class="t" style="top:430.5px;font-size:12px;color:#fff;font-weight:bold;left:832.0px;transform:scaleX(0.997);transform-origin:0 50%;">Offer Price</span>
<div class="a" style="left:357px;top:430px;width:64px;height:21px;overflow:hidden"><span class="t" style="left:12px;top:0.5px;font-size:12px;font-weight:bold;color:#fff;transform:scaleX(.97);transform-origin:0 50%">Net Change</span></div>
<div class="a " style="left:18px;top:451px;width:470px;height:100px;background:#fff"></div>
<div class="a " style="left:488px;top:451px;width:212px;height:100px;background:#8fbc8b"></div>
<div class="a " style="left:700px;top:451px;width:120px;height:100px;background:#add8e6"></div>
<div class="a " style="left:820px;top:451px;width:100px;height:100px;background:#ffb0bf"></div>
<span class="t" style="top:452.4px;font-size:14px;color:#6c6c6c;font-weight:bold;font-family:'DejaVu Sans',sans-serif;-webkit-text-stroke:.6px #6c6c6c;left:22.0px;transform:scaleX(1.000);transform-origin:0 50%;">X</span>
<span class="t" style="top:452.0px;font-size:16px;color:#111;left:40.5px;transform:scaleX(0.965);transform-origin:0 50%;">SIM:Mini-Dow</span>
<div class="a" style="left:163px;top:454.5px;width:102px;height:16.5px;overflow:hidden"><div class="a" style="left:0;top:0;width:102px;height:22px;border:1px solid #7a7a7a;border-radius:4px;background:linear-gradient(#f8f8f8 0,#e8e8e8 8px,#d6d6d6 10px,#c6c6c6 16px)"></div></div>
<span class="t" style="top:454.0px;font-size:14px;color:#111;left:195.4px;transform:scaleX(0.915);transform-origin:0 50%;">Dec12</span>
<div class="a " style="left:270.3px;top:455.2px;width:11.3px;height:10.6px;background:linear-gradient(#cbd98f,#b6c878);border:1px solid #9cb060;border-radius:2.5px"></div>
<span class="t" style="top:452.0px;font-size:16px;color:#111;left:286.7px;transform:scaleX(0.975);transform-origin:0 50%;">Open</span>
<span class="t" style="top:452.0px;font-size:16px;color:#dc1e28;right:486.3px;transform:scaleX(1.000);transform-origin:100% 50%;">-56</span>
<span class="t" style="top:452.0px;font-size:16px;color:#111;right:308.1px;transform:scaleX(1.000);transform-origin:100% 50%;">12724</span>
<span class="t" style="top:452.0px;font-size:16px;color:#111;right:208.9px;transform:scaleX(1.000);transform-origin:100% 50%;">1</span>
<span class="t" style="top:452.0px;font-size:16px;color:#111;right:142.3px;transform:scaleX(1.000);transform-origin:100% 50%;">12724</span>
<span class="t" style="top:452.0px;font-size:16px;color:#111;right:87.9px;transform:scaleX(1.000);transform-origin:100% 50%;">11</span>
<span class="t" style="top:452.0px;font-size:16px;color:#111;right:11.8px;transform:scaleX(1.000);transform-origin:100% 50%;">12726</span>
<span class="t" style="top:472.4px;font-size:14px;color:#6c6c6c;font-weight:bold;font-family:'DejaVu Sans',sans-serif;-webkit-text-stroke:.6px #6c6c6c;left:22.0px;transform:scaleX(1.000);transform-origin:0 50%;">X</span>
<span class="t" style="top:472.0px;font-size:16px;color:#111;left:40.5px;transform:scaleX(0.965);transform-origin:0 50%;">SIM:Euro FX</span>
<div class="a" style="left:163px;top:474.5px;width:102px;height:16.5px;overflow:hidden"><div class="a" style="left:0;top:0;width:102px;height:22px;border:1px solid #7a7a7a;border-radius:4px;background:linear-gradient(#f8f8f8 0,#e8e8e8 8px,#d6d6d6 10px,#c6c6c6 16px)"></div></div>
<span class="t" style="top:474.0px;font-size:14px;color:#111;left:195.4px;transform:scaleX(0.915);transform-origin:0 50%;">Dec12</span>
<div class="a " style="left:270.3px;top:475.2px;width:11.3px;height:10.6px;background:linear-gradient(#cbd98f,#b6c878);border:1px solid #9cb060;border-radius:2.5px"></div>
<span class="t" style="top:472.0px;font-size:16px;color:#111;left:286.7px;transform:scaleX(0.975);transform-origin:0 50%;">Open</span>
<span class="t" style="top:472.0px;font-size:16px;color:#dc1e28;right:486.3px;transform:scaleX(1.000);transform-origin:100% 50%;">-27</span>
<span class="t" style="top:472.0px;font-size:16px;color:#111;right:308.1px;transform:scaleX(1.000);transform-origin:100% 50%;">12690</span>
<span class="t" style="top:472.0px;font-size:16px;color:#111;right:208.9px;transform:scaleX(1.000);transform-origin:100% 50%;">32</span>
<span class="t" style="top:472.0px;font-size:16px;color:#111;right:142.3px;transform:scaleX(1.000);transform-origin:100% 50%;">12690</span>
<span class="t" style="top:472.0px;font-size:16px;color:#111;right:87.9px;transform:scaleX(1.000);transform-origin:100% 50%;">48</span>
<span class="t" style="top:472.0px;font-size:16px;color:#111;right:11.8px;transform:scaleX(1.000);transform-origin:100% 50%;">12691</span>
<span class="t" style="top:492.4px;font-size:14px;color:#6c6c6c;font-weight:bold;font-family:'DejaVu Sans',sans-serif;-webkit-text-stroke:.6px #6c6c6c;left:22.0px;transform:scaleX(1.000);transform-origin:0 50%;">X</span>
<span class="t" style="top:492.0px;font-size:16px;color:#111;left:40.5px;transform:scaleX(0.965);transform-origin:0 50%;">SIM:Crude Oil</span>
<div class="a" style="left:163px;top:494.5px;width:102px;height:16.5px;overflow:hidden"><div class="a" style="left:0;top:0;width:102px;height:22px;border:1px solid #7a7a7a;border-radius:4px;background:linear-gradient(#f8f8f8 0,#e8e8e8 8px,#d6d6d6 10px,#c6c6c6 16px)"></div></div>
<span class="t" style="top:494.0px;font-size:14px;color:#111;left:195.4px;transform:scaleX(0.915);transform-origin:0 50%;">Dec12</span>
<div class="a " style="left:270.3px;top:495.2px;width:11.3px;height:10.6px;background:linear-gradient(#cbd98f,#b6c878);border:1px solid #9cb060;border-radius:2.5px"></div>
<span class="t" style="top:492.0px;font-size:16px;color:#111;left:286.7px;transform:scaleX(0.975);transform-origin:0 50%;">Open</span>
<span class="t" style="top:492.0px;font-size:16px;color:#dc1e28;right:486.3px;transform:scaleX(1.000);transform-origin:100% 50%;">-57</span>
<span class="t" style="top:492.0px;font-size:16px;color:#111;right:308.1px;transform:scaleX(1.000);transform-origin:100% 50%;">8500</span>
<span class="t" style="top:492.0px;font-size:16px;color:#111;right:208.9px;transform:scaleX(1.000);transform-origin:100% 50%;">2</span>
<span class="t" style="top:492.0px;font-size:16px;color:#111;right:142.3px;transform:scaleX(1.000);transform-origin:100% 50%;">8499</span>
<span class="t" style="top:492.0px;font-size:16px;color:#111;right:87.9px;transform:scaleX(1.000);transform-origin:100% 50%;">4</span>
<span class="t" style="top:492.0px;font-size:16px;color:#111;right:11.8px;transform:scaleX(1.000);transform-origin:100% 50%;">8500</span>
<span class="t" style="top:512.4px;font-size:14px;color:#6c6c6c;font-weight:bold;font-family:'DejaVu Sans',sans-serif;-webkit-text-stroke:.6px #6c6c6c;left:22.0px;transform:scaleX(1.000);transform-origin:0 50%;">X</span>
<span class="t" style="top:512.0px;font-size:16px;color:#111;left:40.5px;transform:scaleX(0.965);transform-origin:0 50%;">SIM:Corn</span>
<div class="a" style="left:163px;top:514.5px;width:102px;height:16.5px;overflow:hidden"><div class="a" style="left:0;top:0;width:102px;height:22px;border:1px solid #7a7a7a;border-radius:4px;background:linear-gradient(#f8f8f8 0,#e8e8e8 8px,#d6d6d6 10px,#c6c6c6 16px)"></div></div>
<span class="t" style="top:514.0px;font-size:14px;color:#111;left:195.4px;transform:scaleX(0.915);transform-origin:0 50%;">Dec12</span>
<div class="a " style="left:270.3px;top:515.2px;width:11.3px;height:10.6px;background:linear-gradient(#cbd98f,#b6c878);border:1px solid #9cb060;border-radius:2.5px"></div>
<span class="t" style="top:512.0px;font-size:16px;color:#111;left:286.7px;transform:scaleX(0.975);transform-origin:0 50%;">Open</span>
<span class="t" style="top:512.0px;font-size:16px;color:#1414c8;right:486.3px;transform:scaleX(1.000);transform-origin:100% 50%;">+54</span>
<span class="t" style="top:512.0px;font-size:16px;color:#111;right:308.1px;transform:scaleX(1.000);transform-origin:100% 50%;">7234</span>
<span class="t" style="top:512.0px;font-size:16px;color:#111;right:208.9px;transform:scaleX(1.000);transform-origin:100% 50%;">6</span>
<span class="t" style="top:512.0px;font-size:16px;color:#111;right:142.3px;transform:scaleX(1.000);transform-origin:100% 50%;">7234</span>
<span class="t" style="top:512.0px;font-size:16px;color:#111;right:87.9px;transform:scaleX(1.000);transform-origin:100% 50%;">11</span>
<span class="t" style="top:512.0px;font-size:16px;color:#111;right:11.8px;transform:scaleX(1.000);transform-origin:100% 50%;">7240</span>
<span class="t" style="top:532.4px;font-size:14px;color:#6c6c6c;font-weight:bold;font-family:'DejaVu Sans',sans-serif;-webkit-text-stroke:.6px #6c6c6c;left:22.0px;transform:scaleX(1.000);transform-origin:0 50%;">X</span>
<span class="t" style="top:532.0px;font-size:16px;color:#111;left:40.5px;transform:scaleX(0.965);transform-origin:0 50%;">SIM:10yr Note</span>
<div class="a" style="left:163px;top:534.5px;width:102px;height:16.5px;overflow:hidden"><div class="a" style="left:0;top:0;width:102px;height:22px;border:1px solid #7a7a7a;border-radius:4px;background:linear-gradient(#f8f8f8 0,#e8e8e8 8px,#d6d6d6 10px,#c6c6c6 16px)"></div></div>
<span class="t" style="top:534.0px;font-size:14px;color:#111;left:195.4px;transform:scaleX(0.915);transform-origin:0 50%;">Dec12</span>
<div class="a " style="left:270.3px;top:535.2px;width:11.3px;height:10.6px;background:linear-gradient(#cbd98f,#b6c878);border:1px solid #9cb060;border-radius:2.5px"></div>
<span class="t" style="top:532.0px;font-size:16px;color:#111;left:286.7px;transform:scaleX(0.975);transform-origin:0 50%;">Open</span>
<span class="t" style="top:532.0px;font-size:16px;color:#1414c8;right:486.3px;transform:scaleX(1.000);transform-origin:100% 50%;">+60</span>
<span class="t" style="top:532.0px;font-size:16px;color:#111;right:308.1px;transform:scaleX(1.000);transform-origin:100% 50%;">134025</span>
<span class="t" style="top:532.0px;font-size:16px;color:#111;right:208.9px;transform:scaleX(1.000);transform-origin:100% 50%;">1320</span>
<span class="t" style="top:532.0px;font-size:16px;color:#111;right:142.3px;transform:scaleX(1.000);transform-origin:100% 50%;">134020</span>
<span class="t" style="top:532.0px;font-size:16px;color:#111;right:87.9px;transform:scaleX(1.000);transform-origin:100% 50%;">677</span>
<span class="t" style="top:532.0px;font-size:16px;color:#111;right:11.8px;transform:scaleX(1.000);transform-origin:100% 50%;">134025</span>
<svg style="left:0;top:0" width="907" height="562"><polyline points="427.2,466.5 429.8,468.3 432.4,466.4 435.0,468.2 437.6,466.4 440.2,468.2 442.8,466.3 445.4,468.1 448.0,465.8 450.6,467.0 453.2,464.5 455.8,465.7 458.4,463.7 461.0,465.6 463.6,463.9 466.2,465.8 468.8,464.1 471.4,466.0 474.0,464.3 476.6,465.4 479.2,462.5 481.8,463.2" fill="none" stroke="#86b683" stroke-width="1.7" stroke-linejoin="round" stroke-linecap="round"/></svg>
<svg style="left:0;top:0" width="907" height="562"><polyline points="427.2,479.9 429.8,481.9 432.4,480.4 435.0,482.4 437.6,480.8 440.2,482.8 442.8,480.4 445.4,481.3 448.0,478.6 450.6,479.4 453.2,477.2 455.8,479.1 458.4,477.4 461.0,479.4 463.6,477.7 466.2,479.6 468.8,478.1 471.4,480.4 474.0,479.1 476.6,480.5 479.2,477.7" fill="none" stroke="#86b683" stroke-width="1.7" stroke-linejoin="round" stroke-linecap="round"/><circle cx="483" cy="481" r="1" fill="#86b683"/></svg>
<svg style="left:0;top:0" width="907" height="562"><polyline points="438.0,509.5 440.6,510.7 443.2,508.2 445.8,509.4 448.4,506.9 451.0,508.1 453.6,505.6 456.2,507.4 458.8,506.3 461.4,508.9 464.0,507.8 466.6,510.3 469.2,508.0 471.8,509.0 474.4,506.5 477.0,507.5" fill="none" stroke="#86b683" stroke-width="1.7" stroke-linejoin="round" stroke-linecap="round"/><path d="M481 499.6l2.4 1.6" stroke="#86b683" stroke-width="1.7" stroke-linecap="round"/></svg>
<svg style="left:0;top:0" width="907" height="562"><polyline points="427.2,520.5 429.8,522.3 432.4,520.4 435.0,522.2 437.6,520.3 440.2,522.2 442.8,521.2 445.4,523.8 448.0,522.8 450.6,524.4 453.2,521.8 455.8,522.8 458.4,520.3 461.0,522.1 463.6,520.3 466.2,522.2 468.8,520.4 471.4,522.2 474.0,520.4 476.6,522.2 479.2,520.5 481.8,522.3" fill="none" stroke="#86b683" stroke-width="1.7" stroke-linejoin="round" stroke-linecap="round"/></svg>
<svg style="left:0;top:0" width="907" height="562"><polyline points="427.2,543.1 429.8,544.3 432.4,541.9 435.0,543.1 437.6,541.0 440.2,543.0 442.8,541.4 445.4,543.5 448.0,541.9 450.6,544.0 453.2,542.6 455.8,545.1 458.4,544.0 461.0,546.5 463.6,544.2 466.2,545.5 468.8,543.1 471.4,544.4 474.0,542.1 476.6,543.4 479.2,541.1 481.8,542.3" fill="none" stroke="#86b683" stroke-width="1.7" stroke-linejoin="round" stroke-linecap="round"/></svg>
</div>
</body></html>
